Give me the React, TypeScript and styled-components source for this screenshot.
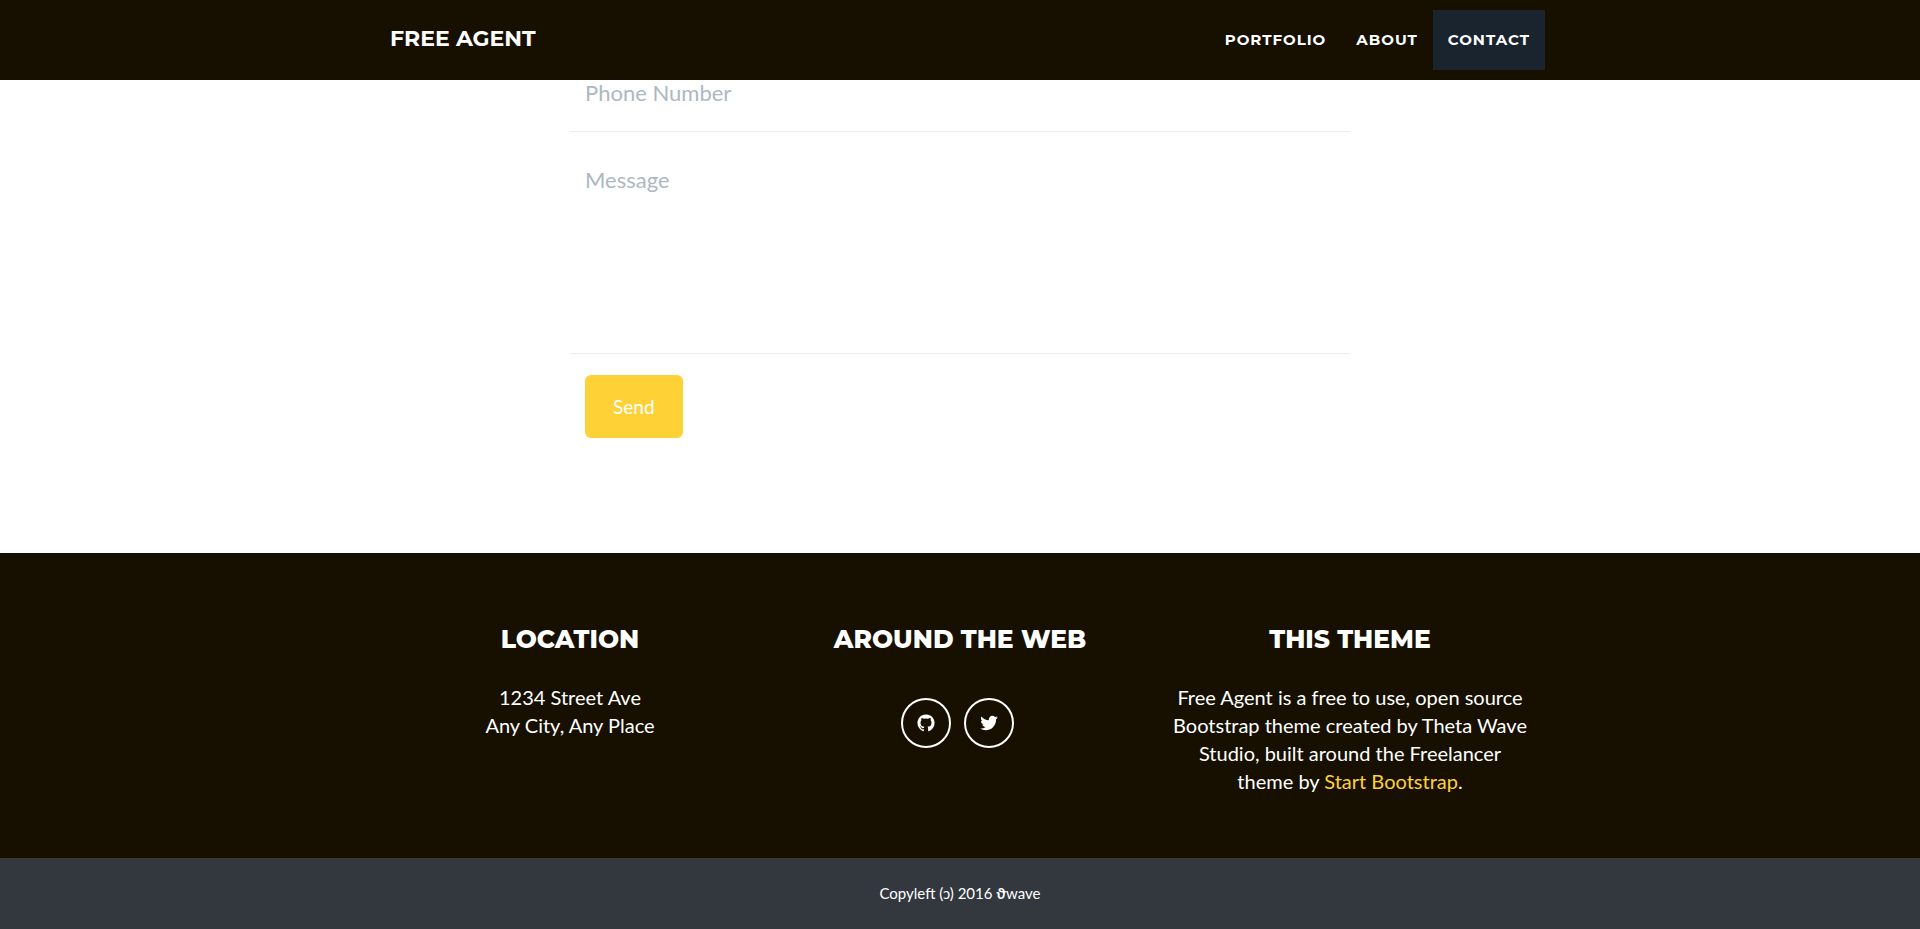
import React from 'react';
import styled, { createGlobalStyle } from 'styled-components';

const ink = '#171001';
const gold = '#fed136';
const display = "Montserrat, Inter, 'Open Sans', sans-serif";

const GlobalStyle = createGlobalStyle`
  *, *::before, *::after { box-sizing: border-box; }
  body {
    margin: 0;
    background: #fff;
    color: #fff;
    font: 400 20px/28px Lato, 'Liberation Sans', sans-serif;
  }
`;

const Container = styled.div`
  max-width: 1170px;
  margin: 0 auto;
  padding: 0 15px;
`;

const Navbar = styled.header`
  position: sticky;
  top: 0;
  z-index: 10;
  background: ${ink};
  font-family: ${display};
`;

const NavInner = styled(Container)`
  display: flex;
  align-items: center;
  justify-content: space-between;
  height: 80px;
  padding-right: 0;
`;

const Brand = styled.a`
  color: #fff;
  font-size: 22px;
  font-weight: 700;
  line-height: 24px;
  padding-bottom: 2px;
  text-decoration: none;
`;

const NavLinks = styled.nav`
  display: flex;
`;

const NavLink = styled.a<{ $active?: boolean }>`
  padding: 20px 15px;
  background: ${({ $active }) => ($active ? '#1a242f' : 'transparent')};
  color: #fff;
  font-size: 15px;
  font-weight: 700;
  line-height: 20px;
  letter-spacing: 1px;
  text-decoration: none;
`;

const ContactForm = styled.form`
  max-width: 780px;
  margin: 0 auto;
  padding-bottom: 115px;
`;

const Field = styled.div<{ $tall?: boolean }>`
  display: flex;
  padding: ${({ $tall }) => ($tall ? '31px 15px 0' : '0 15px 25px')};
  border-bottom: 1px solid #eee;
`;

const fieldStyle = `
  width: 100%;
  padding: 0;
  border: 0;
  outline: 0;
  background: none;
  color: #2c3e50;
  font-family: inherit;
  font-size: 22px;
  resize: none;
  &::placeholder { color: #adb8c3; opacity: 1; }
`;

const TextInput = styled.input`
  ${fieldStyle}
  height: 26px;
  line-height: 26px;
`;

const TextArea = styled.textarea`
  ${fieldStyle}
  height: 190px;
  line-height: 34px;
`;

const SendButton = styled.button`
  display: block;
  margin: 21px 15px 0;
  padding: 17px 28px;
  border: 0;
  border-radius: 6px;
  background: ${gold};
  color: #fff;
  font-family: inherit;
  font-size: 19px;
  line-height: 29px;
  cursor: pointer;
`;

const FooterMain = styled.div`
  padding: 69px 0 63px;
  background: ${ink};
`;

const Columns = styled(Container)`
  display: grid;
  grid-template-columns: repeat(3, 1fr);
  column-gap: 30px;
  text-align: center;
`;

const Heading = styled.h3`
  margin: 0 0 27px;
  font-family: ${display};
  font-size: 25px;
  font-weight: 800;
  line-height: 34px;
`;

const Text = styled.p`
  margin: 0;
`;

const ThemeLink = styled.a`
  color: ${gold};
  text-decoration: none;
`;

const Socials = styled.div`
  display: flex;
  justify-content: center;
  gap: 13px;
  margin-right: 5px;
  padding-top: 15px;
`;

const SocialLink = styled.a`
  display: flex;
  align-items: center;
  justify-content: center;
  width: 50px;
  height: 50px;
  border: 2px solid #fff;
  border-radius: 50%;
  color: #fff;
`;

const FooterBar = styled.div`
  padding: 25px 0 26px;
  background: #33383f;
  font-size: 15px;
  line-height: 20px;
  text-align: center;
`;

const GithubIcon = () => (
  <svg width="20" height="20" viewBox="-128 0 1792 1792" fill="currentColor" aria-hidden="true">
    <path d="M768 128q209 0 385.5 103t279.5 279.5 103 385.5q0 251-146.5 451.5t-378.5 277.5q-27 5-40-7t-13-30q0-3 .5-76.5t.5-134.5q0-97-52-142 57-6 102.5-18t94-39 81-66.500 53-105 20.500-150.500q0-119-79-206 37-91-8-204-28-9-81 11t-92 44l-38 24q-93-26-192-26t-192 26q-16-11-42.500-27t-83.500-38.500-85-13.500q-45 113-8 204-79 87-79 206 0 85 20.500 150t52.500 105 80.500 67 94 39 102.500 18q-39 36-49 103-21 10-45 15t-57 5-65.500-21.500-55.500-62.500q-19-32-48.500-52t-49.500-24l-20-3q-21 0-29 4.500t-5 11.500 9 14 13 12l7 5q22 10 43.500 38t31.500 51l10 23q13 38 44 61.500t67 30 69.500 7 55.500-3.500l23-4q0 38 .5 88.500t.5 54.500q0 18-13 30t-40 7q-232-77-378.500-277.500T0 896q0-209 103-385.500T382.500 231 768 128z" />
  </svg>
);

const TwitterIcon = () => (
  <svg width="20" height="20" viewBox="0 0 1792 1792" fill="currentColor" aria-hidden="true">
    <path d="M1684 408q-67 98-162 167 1 14 1 42 0 130-38 259.500T1369.500 1125 1185 1335.500t-258 146-323 54.500q-271 0-496-145 35 4 78 4 225 0 401-138-105-2-188-64.500T285 1033q33 5 61 5 43 0 85-11-112-23-185.500-111.500T172 710v-4q68 38 146 41-66-44-105-115t-39-154q0-88 44-163 121 149 294.500 238.500T884 653q-8-38-8-74 0-134 94.500-228.500T1199 256q140 0 236 102 109-21 205-78-37 115-142 178 93-10 186-50z" />
  </svg>
);

export default function App() {
  return (
    <>
      <GlobalStyle />
      <Navbar>
        <NavInner>
          <Brand href="#top">FREE AGENT</Brand>
          <NavLinks>
            <NavLink href="#portfolio">PORTFOLIO</NavLink>
            <NavLink href="#about">ABOUT</NavLink>
            <NavLink href="#contact" $active>CONTACT</NavLink>
          </NavLinks>
        </NavInner>
      </Navbar>
      <main id="contact">
        <ContactForm onSubmit={(e) => e.preventDefault()}>
          <Field>
            <TextInput type="tel" placeholder="Phone Number" aria-label="Phone Number" />
          </Field>
          <Field $tall>
            <TextArea placeholder="Message" aria-label="Message" />
          </Field>
          <SendButton type="submit">Send</SendButton>
        </ContactForm>
      </main>
      <footer>
        <FooterMain>
          <Columns>
            <section>
              <Heading>LOCATION</Heading>
              <Text>1234 Street Ave<br />Any City, Any Place</Text>
            </section>
            <section>
              <Heading>AROUND THE WEB</Heading>
              <Socials>
                <SocialLink href="#github" aria-label="GitHub"><GithubIcon /></SocialLink>
                <SocialLink href="#twitter" aria-label="Twitter"><TwitterIcon /></SocialLink>
              </Socials>
            </section>
            <section>
              <Heading>THIS THEME</Heading>
              <Text>
                Free Agent is a free to use, open source Bootstrap theme created by Theta Wave
                Studio, built around the Freelancer theme by{' '}
                <ThemeLink href="#start-bootstrap">Start Bootstrap</ThemeLink>.
              </Text>
            </section>
          </Columns>
        </FooterMain>
        <FooterBar>Copyleft (ɔ) 2016 <b>ϑ</b>wave</FooterBar>
      </footer>
    </>
  );
}
